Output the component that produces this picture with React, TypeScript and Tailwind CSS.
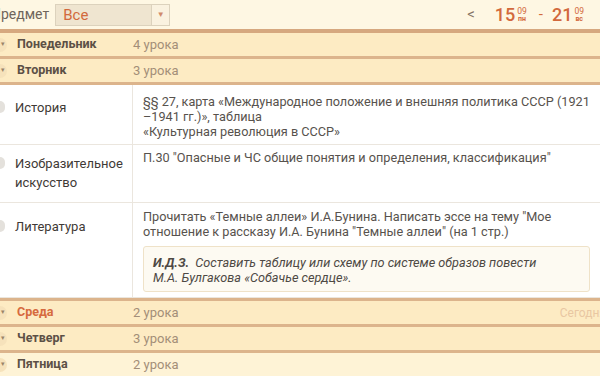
import React from "react";

const days = [
  { name: "Понедельник", count: "4 урока" },
  { name: "Вторник", count: "3 урока" },
];

const bottomDays = [
  { name: "Среда", count: "2 урока", today: true },
  { name: "Четверг", count: "3 урока" },
  { name: "Пятница", count: "2 урока", light: true },
];

function DayRow({ name, count, today, light, top }: { name: string; count: string; today?: boolean; light?: boolean; top?: boolean }) {
  return (
    <div className={`flex items-center h-[26px] border-[#dcb48c] ${top ? "border-t-[3px]" : "border-b-[3px]"} ${light ? "bg-[#fef3d6]" : "bg-[#fdebc3]"}`}>
      <div className="w-[14px] h-[14px] -ml-[7px] rounded-full bg-[#f6e2bb] flex items-center justify-center">
        <span className="text-[7px] text-[#9b8468] ml-[6px] leading-none">▾</span>
      </div>
      <div className={`w-[126px] pl-[10px] text-[12.5px] font-bold ${today ? "text-[#d66a3e]" : "text-[#5c5046]"}`}>{name}</div>
      <div className="flex-1 text-[13px] text-[#a38e78]">{count}</div>
      {today && <div className="text-[12px] text-[#e9c7a2] -mr-[6px]">Сегодня</div>}
    </div>
  );
}

function Lesson({ title, pl, pc, children, h }: { title: React.ReactNode; pl: string; pc: string; children: React.ReactNode; h: string }) {
  return (
    <div className={`flex border-b border-[#ebe6de] bg-white ${h}`}>
      <div className={`w-[133px] shrink-0 flex items-start border-r border-[#ebe6de] ${pl}`}>
        <div className="w-[10px] h-[12px] -ml-[5px] rounded-full bg-[#e4e1dc] mt-[3px]" />
        <div className="pl-[10px] text-[13px] leading-[19px] text-[#3f3a36]">{title}</div>
      </div>
      <div className={`flex-1 pl-[10px] pr-[6px] text-[12.7px] leading-[15px] text-[#57524d] ${pc}`}>{children}</div>
    </div>
  );
}

export default function App() {
  return (
    <div className="w-[600px] h-[376px] overflow-hidden bg-white font-['Roboto',sans-serif]">
      <div className="h-[29px] bg-[#fef7e3] flex items-center">
        <span className="-ml-[9px] text-[14px] text-[#6f655b]">Предмет</span>
        <div className="ml-[6px] flex h-[22px] w-[115px] border border-[#dcd2bd]">
          <div className="flex-1 bg-[#efe5d0] text-[15px] text-[#d2693c] pl-[7px] leading-[20px]">Все</div>
          <div className="w-[18px] bg-[#faf2e0] border-l border-[#dcd2bd] flex items-center justify-center">
            <span className="text-[8px] text-[#d08a6b]">▼</span>
          </div>
        </div>
        <div className="flex-1" />
        <span className="text-[15px] text-[#857565] mr-[20px]">&lt;</span>
        <div className="flex items-center text-[#d2693c]">
          <span className="text-[18px] font-medium">15</span>
          <div className="flex flex-col items-center ml-[2px] text-[8.5px] leading-[8px]">
            <span>09</span>
            <span className="text-[7px] font-bold">пн</span>
          </div>
          <span className="ml-[12px] mr-[9px] text-[15px]">-</span>
          <span className="text-[18px] font-medium">21</span>
          <div className="flex flex-col items-center ml-[2px] text-[8.5px] leading-[8px]">
            <span>09</span>
            <span className="text-[7px] font-bold">вс</span>
          </div>
        </div>
        <div className="w-[16px]" />
      </div>
      <div className="h-[4px] bg-[#d6a87f]" />
      {days.map((d) => (
        <DayRow key={d.name} name={d.name} count={d.count} />
      ))}
      <Lesson title="История" pl="pt-[13px]" pc="pt-[9px]" h="h-[60px]">
        §§ 27, карта «Международное положение и внешняя политика СССР (1921 –1941 гг.)», таблица
        <br />
        «Культурная революция в СССР»
      </Lesson>
      <Lesson title={<>Изобразительное<br />искусство</>} pl="pt-[9px]" pc="pt-[5px]" h="h-[58px]">
        П.30 "Опасные и ЧС общие понятия и определения, классификация"
      </Lesson>
      <Lesson title="Литература" pl="pt-[14px]" pc="pt-[6px]" h="h-[95px]">
        Прочитать «Темные аллеи» И.А.Бунина. Написать эссе на тему "Мое отношение к рассказу И.А. Бунина "Темные аллеи" (на 1 стр.)
        <div className="mt-[7px] mr-[4px] rounded-[3px] border border-[#efe2c8] bg-[#fdfaf2] px-[9px] pt-[8px] pb-[6px] italic text-[#4e4944]">
          <span className="font-bold">И.Д.З.</span>&nbsp; Составить таблицу или схему по системе образов повести
          <br />
          М.А. Булгакова «Собачье сердце».
        </div>
      </Lesson>
      {bottomDays.map((d) => (
        <DayRow key={d.name} name={d.name} count={d.count} today={d.today} light={d.light} top />
      ))}
    </div>
  );
}
